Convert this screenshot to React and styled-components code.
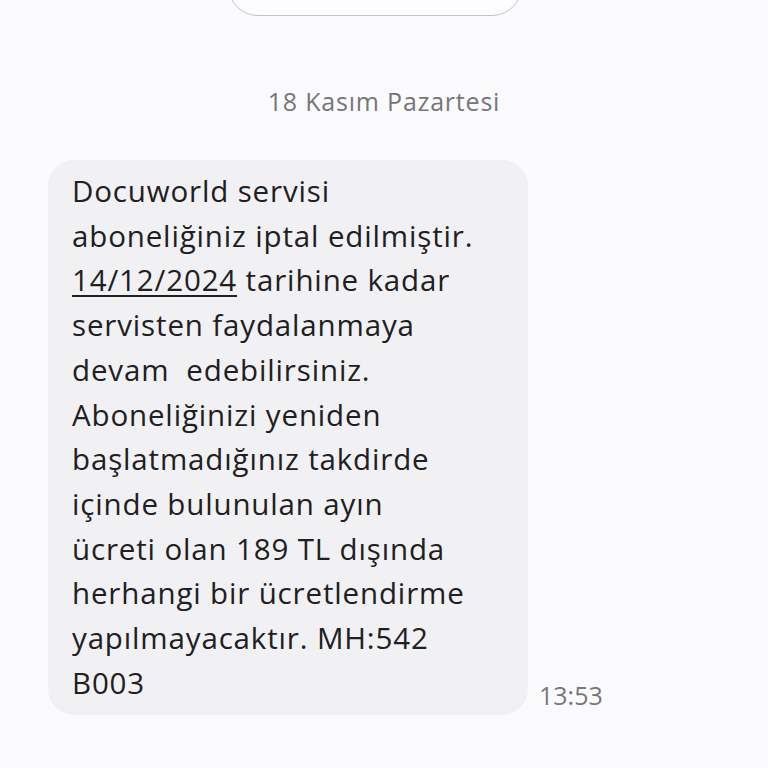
import React from 'react'
import styled, { createGlobalStyle } from 'styled-components'

const GlobalStyle = createGlobalStyle`
  html, body {
    margin: 0;
    padding: 0;
    background: #fbfbfd;
  }
  body {
    font-family: "Open Sans", "Noto Sans", "Liberation Sans", sans-serif;
    -webkit-font-smoothing: antialiased;
  }
`

const Screen = styled.div`
  width: 768px;
  height: 768px;
  overflow: hidden;
  display: flex;
  flex-direction: column;
  background: #fbfbfd;
`

const TopCard = styled.div`
  margin-left: 228px;
  width: 294px;
  height: 60px;
  margin-top: -44px;
  box-sizing: border-box;
  border: 1.5px solid #c4c4c6;
  border-radius: 30px;
  background: #fdfdff;
`

const DateLabel = styled.div`
  margin-top: 70px;
  text-align: center;
  font-size: 25px;
  line-height: 30px;
  letter-spacing: 0.8px;
  color: #767679;
`

const MessageRow = styled.div`
  display: flex;
  align-items: flex-end;
  gap: 11px;
  margin-top: 44px;
  padding-left: 48px;
`

const Bubble = styled.div`
  width: 480px;
  box-sizing: border-box;
  padding: 9px 16px 10px 24px;
  background: #f1f1f3;
  border-radius: 26px;
  font-size: 29.5px;
  line-height: 44.7px;
  letter-spacing: 0.85px;
  color: #202022;
  white-space: pre-wrap;
`

const DateLink = styled.span`
  text-decoration: underline;
  text-underline-offset: 4px;
  text-decoration-thickness: 1.5px;
`

const Time = styled.div`
  font-size: 25px;
  color: #77777a;
  margin-bottom: 3px;
`

export default function App() {
  return (
    <Screen>
      <GlobalStyle />
      <TopCard />
      <DateLabel>18 Kasım Pazartesi</DateLabel>
      <MessageRow>
        <Bubble>
          {'Docuworld servisi\naboneliğiniz iptal edilmiştir.\n'}
          <DateLink>14/12/2024</DateLink>
          {' tarihine kadar\nservisten faydalanmaya\ndevam  edebilirsiniz.\nAboneliğinizi yeniden\nbaşlatmadığınız takdirde\niçinde bulunulan ayın\nücreti olan 189 TL dışında\nherhangi bir ücretlendirme\nyapılmayacaktır. MH:542\nB003'}
        </Bubble>
        <Time>13:53</Time>
      </MessageRow>
    </Screen>
  )
}
